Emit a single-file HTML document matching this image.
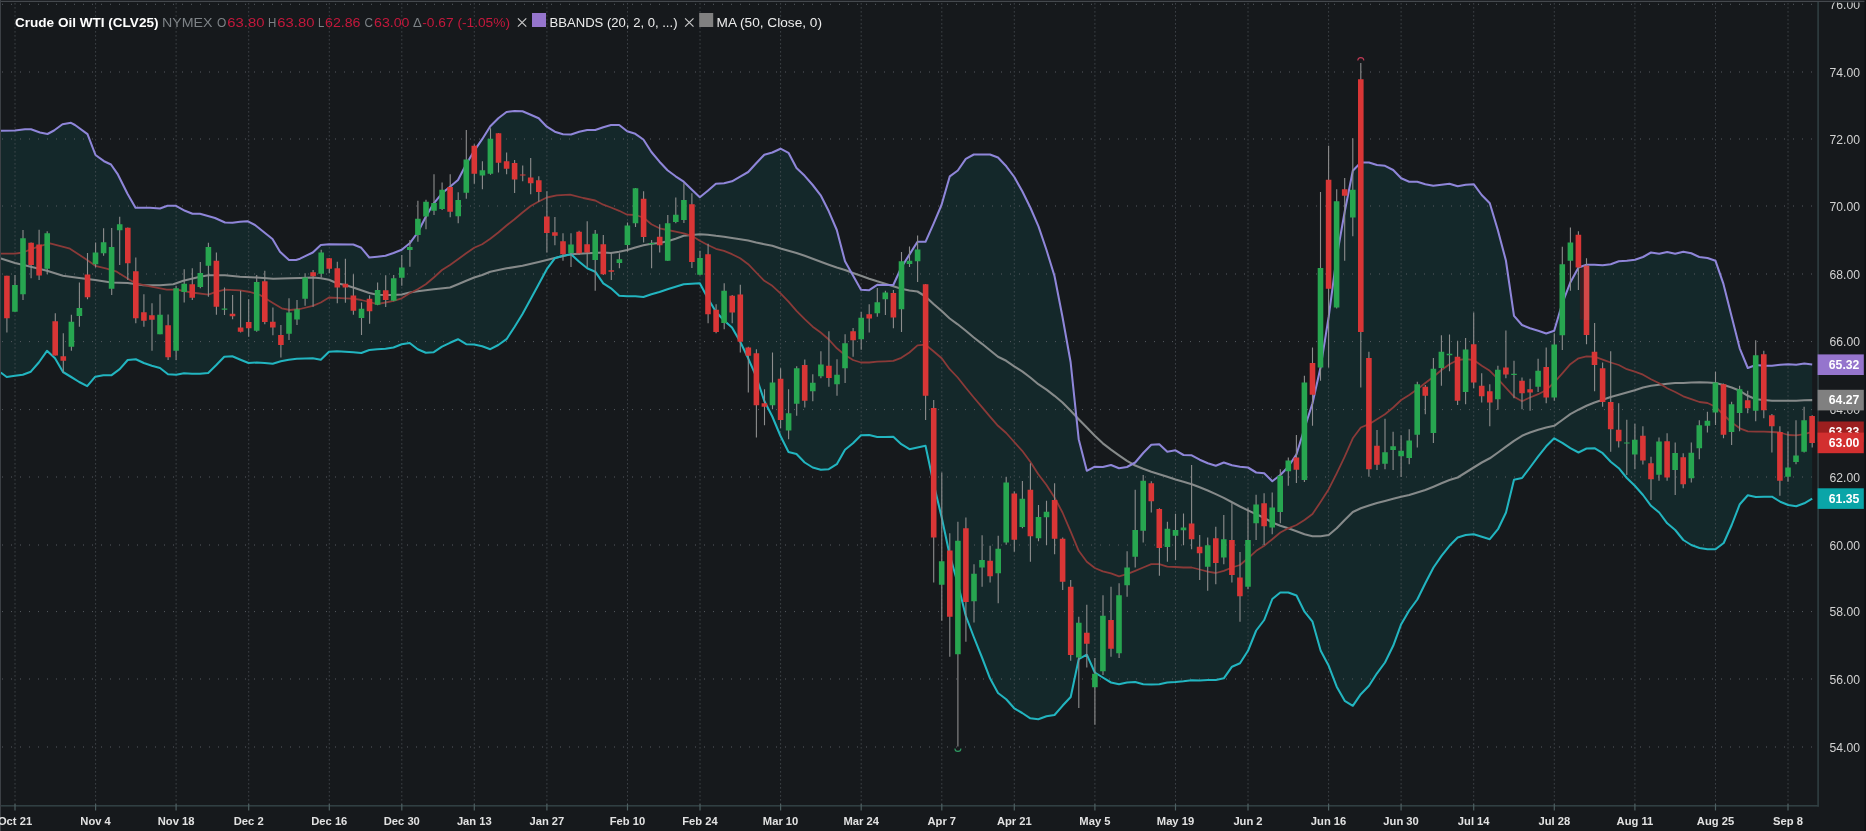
<!DOCTYPE html>
<html lang="en"><head><meta charset="utf-8"><title>Crude Oil WTI (CLV25) Chart</title>
<style>
html,body{margin:0;padding:0;background:#16191c;width:1866px;height:831px;overflow:hidden;font-family:"Liberation Sans",sans-serif;}
#chart{position:relative;width:1866px;height:831px;overflow:hidden;background:#16191c;}
</style></head><body><div id="chart">
<svg width="1866" height="831" viewBox="0 0 1866 831" style="position:absolute;left:0;top:0;display:block">
<rect width="1866" height="831" fill="#16191c"/>
<path d="M0 130.8 L2 130.8 L15 130.5 L25 129.2 L31 129.2 L40 132.5 L47.5 134 L54 130.5 L62.5 124.2 L71 122.8 L75 125 L87.5 134.2 L95.5 155 L104 161.2 L111 164.5 L117.5 173.8 L127.5 193.8 L135.5 207.8 L150 207.8 L160 208.5 L167.5 205.8 L176 205.8 L185 210.8 L192.5 213.8 L200 213.8 L215 218 L225 222.5 L232.5 222.8 L240 221.8 L247.5 221.2 L255 225 L272.5 239 L280 251.8 L289 260 L296 260 L300 258.7 L312.8 252.5 L320.8 245 L329 244.2 L353.3 244.5 L361.3 247.8 L369.3 257.5 L377.3 256.7 L385.5 255.8 L393.5 253 L401.7 249.7 L409.7 243.3 L417.7 232.5 L425.8 216.7 L433.8 203.3 L442 193.3 L450 186.7 L458 180 L466.2 164.2 L474.2 150.8 L482.2 139.2 L490.3 126.3 L498.3 118.3 L506.5 112 L514.5 111 L522.5 111.2 L530.7 114.7 L538.7 118.3 L546.8 126.7 L554.8 131.7 L563 134.2 L571 134.5 L579.2 131.7 L587.2 130 L595.2 130 L603.3 127.2 L611 125 L619.2 125 L627.2 131.3 L635.3 133.8 L643.4 139.5 L651.4 152 L659.5 161.7 L667.5 170.3 L675.6 176.3 L683.7 181.7 L691.7 189.5 L699.8 197.2 L707.8 190.8 L715.9 183.8 L724 183.3 L732 181.3 L740.2 176.7 L748.2 172 L756.2 163.3 L764.3 154.7 L772.3 152.5 L780.5 148.7 L788.5 152.8 L796.5 168 L804.7 175.8 L812.7 185 L820.7 195.3 L828.8 211.3 L836.8 230 L845 261.3 L853 275.5 L861 289.8 L869.2 290.2 L877.2 284.8 L885.2 285 L893.3 285 L901.3 267.5 L909.4 254.6 L917.5 241.8 L925.5 241.8 L933.5 223.8 L941.5 205 L949.8 176.3 L957.8 170.5 L965.8 158.8 L973.8 154.5 L982 154.5 L990 154.5 L998 157.5 L1006.3 166.3 L1014.3 177 L1022.3 191.3 L1030.3 207.5 L1038.5 226.3 L1046.5 250 L1054.5 276 L1062.5 317 L1070.6 362 L1078.7 439.2 L1086.8 470.8 L1094.8 466.7 L1102.8 467 L1111 465 L1119 468.3 L1127 467 L1135.2 462.5 L1143.2 453 L1151.3 444.7 L1159.3 444.2 L1167.3 451.7 L1175.5 450.3 L1183.5 455 L1191.7 455.3 L1199.7 459.7 L1207.8 463.3 L1215.8 465.8 L1223.8 462.5 L1232 465.3 L1240 466.7 L1248 467.5 L1256.2 472.5 L1264.2 473.3 L1272.3 481.3 L1280.3 475 L1288.3 466.7 L1296.5 454.2 L1304.5 428.3 L1312.5 403.3 L1320.7 366.7 L1328.7 316.7 L1336.7 256.7 L1344.7 211.7 L1352.8 170.8 L1360.8 162.5 L1369 162.5 L1377 165 L1385 165.8 L1393.2 170 L1401.2 178.3 L1409.2 181.7 L1417.3 181.7 L1425.3 184.2 L1433.3 185.8 L1441.5 184.7 L1449.5 183.7 L1457.7 186.3 L1465.7 184.7 L1473.7 184.2 L1481.7 195 L1489.8 203.3 L1497.8 230 L1505.9 260.5 L1514 315.8 L1522 325 L1530 328.3 L1538.2 330.8 L1546.2 333.5 L1554.2 330.8 L1562.3 303.3 L1570.3 282.5 L1578.5 267.5 L1586.5 264.7 L1594.5 264.7 L1602.7 265.3 L1610.7 264.2 L1618.8 261.3 L1626.8 260.8 L1635 259.7 L1643 257 L1651 252.5 L1659.2 253.7 L1667.2 252 L1675.2 253.7 L1683.3 251.7 L1691.3 253.3 L1699.3 257 L1707.5 258 L1715.5 260.8 L1723.5 284.2 L1731.7 316.7 L1739.7 348.3 L1747.8 368 L1755.8 365 L1764 365.8 L1772 365.8 L1780.2 364.7 L1788.2 364.2 L1796.2 364.7 L1804.3 363.6 L1812.2 364.6 L1812.2 498.6 L1804.3 503.3 L1796.2 506.3 L1788.2 505 L1780.2 501.7 L1772 496.7 L1764 496.7 L1755.8 497 L1747.8 495.3 L1739.8 504.2 L1731.7 525 L1723.7 543 L1715.5 549.2 L1707.5 549.2 L1699.5 548 L1691.3 545 L1683.3 540 L1675.2 530 L1667.2 523.3 L1659.2 512.5 L1651 505.8 L1643 495 L1634.8 485.8 L1626.8 478 L1618.8 468.2 L1610.7 461.7 L1602.7 453.2 L1594.5 448.2 L1586.5 448.5 L1578.5 452.5 L1570.3 448.2 L1562.3 442.8 L1554.2 438.3 L1546.2 446.3 L1538.2 456.3 L1530 467.5 L1522 478 L1514 479.7 L1506 512.5 L1498 529.2 L1489.8 539.2 L1481.8 536.7 L1473.7 534.2 L1465.7 535 L1457.7 537.5 L1449.5 545.8 L1441.5 555.8 L1433.5 567.5 L1425.3 583.3 L1417.3 599.5 L1409.2 610.5 L1401.2 624.2 L1393.2 645.8 L1385 662.5 L1377 673.3 L1369 685.8 L1360.8 694.2 L1352.8 705.8 L1344.7 700.8 L1336.7 686.7 L1328.7 665.8 L1320.7 650.8 L1312.5 621.7 L1304.5 611.7 L1296.5 595.5 L1288.3 592.5 L1280.3 592.5 L1272.3 599 L1264.2 620 L1256.2 630.5 L1248 650.8 L1240 663.3 L1232 666.7 L1223.8 678.3 L1215.8 680 L1207.8 680 L1199.7 680.5 L1191.7 680.3 L1183.5 681.3 L1175.5 682 L1167.3 682.5 L1159.3 684.2 L1151.3 684.5 L1143.2 684.2 L1135.2 682 L1127 682.5 L1119 684.2 L1111 682.5 L1102.8 677.5 L1094.8 672.5 L1086.8 654.7 L1078.7 659.2 L1070.7 697 L1062.5 705.8 L1054.5 715 L1046.5 716.2 L1038.3 719.2 L1030.3 718.3 L1022.2 713 L1014.2 708.3 L1006.2 699.2 L998 693 L990 678.3 L982 657.5 L973.8 637 L965.8 616 L957.7 583.3 L949.7 555 L941.7 517.5 L933.5 483.3 L925.5 445.8 L917.5 447.5 L909.5 449.2 L901.3 444.2 L893.3 436.7 L885.3 437 L877.2 437 L869.2 435 L861 435.3 L853 443.3 L845 449.8 L836.8 464.2 L828.8 469.2 L820.8 469.7 L812.7 467.5 L804.7 462.5 L796.5 454 L788.5 452 L780.5 436 L772.3 416.5 L764.3 401 L756.2 376.7 L748.2 358.3 L740.2 341.7 L732 327.5 L724 320.5 L715.9 311.7 L707.8 298.3 L699.8 283.3 L691.7 283.8 L683.7 284.2 L675.6 286.7 L667.5 289.2 L659.5 292 L651.4 294.2 L643.4 297 L635.3 296.3 L627.2 296.3 L619.2 295.8 L611 288.3 L603.3 283.3 L595.2 271.7 L587.2 268.3 L579.2 261.7 L571 254.2 L563 255.8 L554.8 258.3 L546.8 269.2 L538.7 284.2 L530.7 299 L522.5 314 L514.5 327 L506.5 339.2 L498.3 345 L490.3 349.2 L482.2 346.3 L474.2 344.5 L466.2 344.2 L458 339.2 L450 342.8 L442 346.7 L433.8 352.2 L425.8 352.8 L417.7 349.2 L409.7 343 L401.7 344.2 L393.5 347.5 L385.5 348.7 L377.3 349.2 L369.3 350 L361.3 353 L353.2 352.2 L345.2 351.7 L337 351.3 L329 351.7 L320.8 359.7 L312.8 358.3 L305 358.5 L296.8 358.8 L288.8 359.7 L280.8 361.3 L272.7 363.7 L264.7 363 L256.7 362.5 L248.5 363 L240.5 359.7 L232.3 356.2 L224.3 356.7 L216.3 365 L208.2 373 L200 373.8 L192 373.8 L184 373.3 L176.2 374.7 L168 374.2 L160 368 L151.8 365.8 L143.8 363 L135.8 359.2 L127.7 360 L119.7 369.2 L111.3 375.3 L103.3 375.3 L95.3 376.7 L87.2 386.2 L79.2 382 L71.2 377 L63 372 L55 358.3 L47 350.8 L38.8 362.5 L30.8 371.7 L22.8 374.7 L15 375.8 L6.7 377 L1.7 373.3 L0 372.5Z" fill="rgba(0,200,190,0.09)"/>
<path d="M15 3.4V805 M95.6 3.4V805 M176.1 3.4V805 M248.7 3.4V805 M329.3 3.4V805 M401.8 3.4V805 M474.3 3.4V805 M546.9 3.4V805 M627.5 3.4V805 M700 3.4V805 M780.6 3.4V805 M861.2 3.4V805 M941.8 3.4V805 M1014.3 3.4V805 M1094.9 3.4V805 M1175.5 3.4V805 M1248 3.4V805 M1328.6 3.4V805 M1401.1 3.4V805 M1473.7 3.4V805 M1554.3 3.4V805 M1634.9 3.4V805 M1715.5 3.4V805 M1788 3.4V805" stroke="#565b61" stroke-width="1" stroke-dasharray="1 3" fill="none"/>
<path d="M2 747H1813 M2 679H1813 M2 611.6H1813 M2 545H1813 M2 477H1813 M2 409.6H1813 M2 341.6H1813 M2 274H1813 M2 206H1813 M2 139H1813 M2 72H1813 M2 4.3H1813" stroke="#565b61" stroke-width="1" stroke-dasharray="1 8" fill="none"/>
<path d="M0 258.2 L1.7 258.7 L15 263 L30.8 266.7 L47 270.8 L63 275.8 L79.2 278 L95.3 280 L111.3 282.5 L127.7 283 L143.3 285.3 L160 285.3 L173.3 284.2 L183.3 280.8 L200 276.7 L208.3 275.3 L225 275.3 L240 276.7 L256.7 277.5 L273.3 278.7 L290 278.3 L300 278 L312.8 277.5 L320.8 278.3 L329 279.7 L337 283.3 L345.2 285 L353.2 287.5 L361.3 290.3 L369.3 293 L377.3 294.7 L385.5 295 L393.5 295 L401.7 294.5 L409.7 292.5 L417.7 291.3 L433.8 289.2 L450 287.5 L458 284.2 L466.2 280.8 L474.2 277.5 L482.2 275 L490.3 271.7 L506.5 268.3 L522.5 265.8 L538.7 262 L554.8 258 L571 254.2 L587.2 253.3 L603.3 252.5 L611 253 L619.2 251.7 L627.2 250 L635.3 247.5 L643.4 245.3 L651.4 243.7 L659.5 243 L667.5 241.3 L675.6 238.7 L683.7 235.8 L691.7 235 L699.8 234.2 L707.8 234.7 L715.9 235.8 L724 236.7 L732 238 L740.2 239.2 L748.2 240.5 L756.2 242.5 L764.3 244.2 L772.3 245.8 L780.5 248.5 L788.5 250.8 L796.5 253 L804.7 255.8 L812.7 258.7 L820.7 261.7 L828.8 264.7 L836.8 267.5 L845 270 L853 273 L861 275.8 L869.2 278.7 L877.2 281.3 L885.2 283.7 L893.3 286.3 L901.3 288.7 L909.4 290.5 L917.5 291.5 L925.5 296.5 L933.5 304 L941.7 311 L949.7 318.5 L957.7 324.3 L965.8 330.8 L973.8 337.5 L982 343.8 L990 350.3 L998 356.7 L1006.2 360.8 L1014.2 366.3 L1022.2 371.3 L1030.3 377.5 L1038.3 384.2 L1046.5 389.7 L1054.5 395.8 L1062.5 402.5 L1070.7 410.8 L1078.7 419.2 L1086.8 427.5 L1094.8 435.8 L1102.8 443.3 L1111 449.7 L1119 455.3 L1127 460.8 L1135.2 465.5 L1143.2 468.8 L1151.3 471.7 L1159.3 474.2 L1167.3 476.8 L1175.5 479.4 L1183.5 481.7 L1191.7 484.2 L1199.7 487.2 L1207.7 490.5 L1215.8 494.1 L1223.8 497.9 L1232 502.3 L1240 506.5 L1248 510.4 L1256.2 514.2 L1264.2 517.8 L1272.3 522.5 L1280.3 525.8 L1288.3 528.3 L1296.5 531.2 L1304.5 534.2 L1312.5 536.3 L1320.7 536.3 L1328.7 535 L1336.7 528.3 L1344.7 520 L1352.8 512 L1360.8 508.2 L1369 505.5 L1377 503 L1385 501 L1393.2 498.8 L1401.2 496.7 L1409.2 495 L1417.3 492.5 L1425.3 490 L1433.5 486.7 L1441.5 483.3 L1449.5 480 L1457.7 477.5 L1465.7 472.5 L1473.7 467.5 L1481.8 462.5 L1489.8 458.3 L1498 452.5 L1506 446.7 L1514 440.8 L1522 435.8 L1530 432.5 L1538.2 429.7 L1546.2 427.5 L1554.2 425.8 L1562.3 420 L1570.3 414.2 L1578.5 409.7 L1586.5 405.8 L1594.5 402.5 L1602.7 399.7 L1610.7 397 L1618.8 394.7 L1626.8 392.5 L1634.8 390.3 L1643 387.5 L1651 385.8 L1659.2 384.7 L1667.2 383.7 L1675.2 383 L1683.3 383 L1691.3 382.5 L1699.5 382.2 L1707.5 382.5 L1715.5 383 L1723.7 385 L1731.7 387.5 L1739.8 390.8 L1747.8 395.8 L1755.8 399.2 L1764 400 L1772 400.8 L1780.2 400.8 L1788.2 400.8 L1796.2 400.8 L1804.3 400.3 L1812.2 400.1" stroke="#868a8a" stroke-width="2.1" fill="none" stroke-linejoin="round"/>
<path d="M0 253.7 L1.7 253.7 L15 253.7 L22.8 252.5 L38.7 246.3 L50 243.3 L70 248.7 L87.2 260 L95.3 265.8 L106.7 268.7 L116.7 271.7 L130 280 L135.8 283.3 L150 286.3 L166.7 289.7 L176.7 289.7 L191.7 292.5 L208.3 294.7 L216.7 291.7 L225 289.7 L240 290.3 L250 292 L260 295 L273.3 303.3 L281.7 308.3 L290 310 L300 309 L312.8 305.8 L320.8 302.5 L329 297.5 L337 297.8 L345.2 298.3 L353.2 298.7 L361.3 300 L369.3 302 L377.3 304.2 L385.5 302.5 L393.5 300.8 L401.7 298.3 L409.7 293.3 L417.7 289.2 L425.8 284.2 L433.8 277.5 L442 270 L450 265 L458 259.2 L466.2 253.3 L474.2 247.8 L482.2 244.2 L490.3 238.7 L498.3 232.5 L506.5 225.5 L514.5 219.2 L522.5 212.5 L530.7 206 L538.7 201.5 L546.8 197.5 L556.7 195.3 L570 194.7 L583.3 198 L595.2 200.5 L603.3 204.7 L611 207.5 L619.2 210.8 L627.2 214.7 L635.3 215 L643.4 217.5 L651.4 224.2 L659.5 228.3 L667.5 230 L675.6 231.7 L683.7 233.3 L691.7 235.8 L699.8 240.8 L707.8 245 L715.9 248.8 L724 250.8 L732 254.2 L740.2 258.3 L748.2 264.2 L756.2 272.5 L764.3 280.8 L772.3 285.8 L780.5 293.3 L788.5 301.7 L796.5 310.8 L804.7 319.2 L812.7 326.7 L820.7 332.5 L828.8 339.5 L836.8 348.3 L845 355 L853 360 L861 362.5 L869.2 362.5 L877.2 361.7 L885.2 361.3 L893.3 360.8 L901.3 357.8 L909.4 352.5 L917.5 345.3 L925.5 344.7 L933.5 351.2 L941.7 358.3 L949.7 369.2 L957.7 377.5 L965.8 387.8 L973.8 397.5 L982 407.2 L990 416.7 L998 425.8 L1006.2 433 L1014.2 442 L1022.2 450.8 L1030.3 461.7 L1038.3 474.2 L1046.5 485 L1054.5 497.5 L1062.5 512.5 L1070.7 531.7 L1078.7 550.8 L1086.8 561.7 L1094.8 568 L1102.8 571.3 L1111 573.3 L1119 576.3 L1127 574.2 L1135.2 570.8 L1143.2 567.5 L1151.3 564.2 L1159.3 564.2 L1167.3 566.7 L1175.5 567 L1183.5 567.5 L1191.7 567.5 L1199.7 569.5 L1207.8 571.7 L1215.8 573 L1223.8 570.8 L1232 567.5 L1240 565 L1248 558.3 L1256.2 550.8 L1264.2 545.8 L1272.3 539.2 L1280.3 532.5 L1288.3 528.3 L1296.5 525 L1304.5 520 L1312.5 514 L1320.7 501.7 L1328.7 489.2 L1336.7 473.3 L1344.7 456.7 L1352.8 438.3 L1360.8 427.5 L1369 424.2 L1377 419.2 L1385 414.2 L1393.2 407.5 L1401.2 400 L1409.2 395 L1417.3 389.2 L1425.3 383 L1433.5 376.7 L1441.5 370 L1449.5 364.2 L1457.7 360 L1465.7 359.2 L1473.7 360 L1481.8 365.8 L1489.8 370.8 L1498 379.2 L1506 387.8 L1514 396.7 L1522 401.3 L1530 397.5 L1538.2 394.2 L1546.2 390 L1554.2 382.5 L1562.3 373.3 L1570.3 364.2 L1578.5 358.3 L1586.5 356.3 L1594.5 356.7 L1602.7 359.7 L1610.7 362.5 L1618.8 365 L1626.8 369.2 L1634.8 371.7 L1643 374.7 L1651 379.2 L1659.2 383.3 L1667.2 388.3 L1675.2 392 L1683.3 396.3 L1691.3 399.2 L1699.5 402 L1707.5 403 L1715.5 406.7 L1723.7 415 L1731.7 422.5 L1739.8 428.3 L1747.8 431.3 L1755.8 431.7 L1764 431.7 L1772 432 L1780.2 432.5 L1788.2 435 L1796.2 435.3 L1804.3 434.2 L1812.2 431.8" stroke="#8a3a38" stroke-width="1.8" fill="none" stroke-linejoin="round"/>
<path d="M0 130.8 L2 130.8 L15 130.5 L25 129.2 L31 129.2 L40 132.5 L47.5 134 L54 130.5 L62.5 124.2 L71 122.8 L75 125 L87.5 134.2 L95.5 155 L104 161.2 L111 164.5 L117.5 173.8 L127.5 193.8 L135.5 207.8 L150 207.8 L160 208.5 L167.5 205.8 L176 205.8 L185 210.8 L192.5 213.8 L200 213.8 L215 218 L225 222.5 L232.5 222.8 L240 221.8 L247.5 221.2 L255 225 L272.5 239 L280 251.8 L289 260 L296 260 L300 258.7 L312.8 252.5 L320.8 245 L329 244.2 L353.3 244.5 L361.3 247.8 L369.3 257.5 L377.3 256.7 L385.5 255.8 L393.5 253 L401.7 249.7 L409.7 243.3 L417.7 232.5 L425.8 216.7 L433.8 203.3 L442 193.3 L450 186.7 L458 180 L466.2 164.2 L474.2 150.8 L482.2 139.2 L490.3 126.3 L498.3 118.3 L506.5 112 L514.5 111 L522.5 111.2 L530.7 114.7 L538.7 118.3 L546.8 126.7 L554.8 131.7 L563 134.2 L571 134.5 L579.2 131.7 L587.2 130 L595.2 130 L603.3 127.2 L611 125 L619.2 125 L627.2 131.3 L635.3 133.8 L643.4 139.5 L651.4 152 L659.5 161.7 L667.5 170.3 L675.6 176.3 L683.7 181.7 L691.7 189.5 L699.8 197.2 L707.8 190.8 L715.9 183.8 L724 183.3 L732 181.3 L740.2 176.7 L748.2 172 L756.2 163.3 L764.3 154.7 L772.3 152.5 L780.5 148.7 L788.5 152.8 L796.5 168 L804.7 175.8 L812.7 185 L820.7 195.3 L828.8 211.3 L836.8 230 L845 261.3 L853 275.5 L861 289.8 L869.2 290.2 L877.2 284.8 L885.2 285 L893.3 285 L901.3 267.5 L909.4 254.6 L917.5 241.8 L925.5 241.8 L933.5 223.8 L941.5 205 L949.8 176.3 L957.8 170.5 L965.8 158.8 L973.8 154.5 L982 154.5 L990 154.5 L998 157.5 L1006.3 166.3 L1014.3 177 L1022.3 191.3 L1030.3 207.5 L1038.5 226.3 L1046.5 250 L1054.5 276 L1062.5 317 L1070.6 362 L1078.7 439.2 L1086.8 470.8 L1094.8 466.7 L1102.8 467 L1111 465 L1119 468.3 L1127 467 L1135.2 462.5 L1143.2 453 L1151.3 444.7 L1159.3 444.2 L1167.3 451.7 L1175.5 450.3 L1183.5 455 L1191.7 455.3 L1199.7 459.7 L1207.8 463.3 L1215.8 465.8 L1223.8 462.5 L1232 465.3 L1240 466.7 L1248 467.5 L1256.2 472.5 L1264.2 473.3 L1272.3 481.3 L1280.3 475 L1288.3 466.7 L1296.5 454.2 L1304.5 428.3 L1312.5 403.3 L1320.7 366.7 L1328.7 316.7 L1336.7 256.7 L1344.7 211.7 L1352.8 170.8 L1360.8 162.5 L1369 162.5 L1377 165 L1385 165.8 L1393.2 170 L1401.2 178.3 L1409.2 181.7 L1417.3 181.7 L1425.3 184.2 L1433.3 185.8 L1441.5 184.7 L1449.5 183.7 L1457.7 186.3 L1465.7 184.7 L1473.7 184.2 L1481.7 195 L1489.8 203.3 L1497.8 230 L1505.9 260.5 L1514 315.8 L1522 325 L1530 328.3 L1538.2 330.8 L1546.2 333.5 L1554.2 330.8 L1562.3 303.3 L1570.3 282.5 L1578.5 267.5 L1586.5 264.7 L1594.5 264.7 L1602.7 265.3 L1610.7 264.2 L1618.8 261.3 L1626.8 260.8 L1635 259.7 L1643 257 L1651 252.5 L1659.2 253.7 L1667.2 252 L1675.2 253.7 L1683.3 251.7 L1691.3 253.3 L1699.3 257 L1707.5 258 L1715.5 260.8 L1723.5 284.2 L1731.7 316.7 L1739.7 348.3 L1747.8 368 L1755.8 365 L1764 365.8 L1772 365.8 L1780.2 364.7 L1788.2 364.2 L1796.2 364.7 L1804.3 363.6 L1812.2 364.6" stroke="#8f86d9" stroke-width="2.05" fill="none" stroke-linejoin="round"/>
<path d="M0 372.5 L1.7 373.3 L6.7 377 L15 375.8 L22.8 374.7 L30.8 371.7 L38.8 362.5 L47 350.8 L55 358.3 L63 372 L71.2 377 L79.2 382 L87.2 386.2 L95.3 376.7 L103.3 375.3 L111.3 375.3 L119.7 369.2 L127.7 360 L135.8 359.2 L143.8 363 L151.8 365.8 L160 368 L168 374.2 L176.2 374.7 L184 373.3 L192 373.8 L200 373.8 L208.2 373 L216.3 365 L224.3 356.7 L232.3 356.2 L240.5 359.7 L248.5 363 L256.7 362.5 L264.7 363 L272.7 363.7 L280.8 361.3 L288.8 359.7 L296.8 358.8 L305 358.5 L312.8 358.3 L320.8 359.7 L329 351.7 L337 351.3 L345.2 351.7 L353.2 352.2 L361.3 353 L369.3 350 L377.3 349.2 L385.5 348.7 L393.5 347.5 L401.7 344.2 L409.7 343 L417.7 349.2 L425.8 352.8 L433.8 352.2 L442 346.7 L450 342.8 L458 339.2 L466.2 344.2 L474.2 344.5 L482.2 346.3 L490.3 349.2 L498.3 345 L506.5 339.2 L514.5 327 L522.5 314 L530.7 299 L538.7 284.2 L546.8 269.2 L554.8 258.3 L563 255.8 L571 254.2 L579.2 261.7 L587.2 268.3 L595.2 271.7 L603.3 283.3 L611 288.3 L619.2 295.8 L627.2 296.3 L635.3 296.3 L643.4 297 L651.4 294.2 L659.5 292 L667.5 289.2 L675.6 286.7 L683.7 284.2 L691.7 283.8 L699.8 283.3 L707.8 298.3 L715.9 311.7 L724 320.5 L732 327.5 L740.2 341.7 L748.2 358.3 L756.2 376.7 L764.3 401 L772.3 416.5 L780.5 436 L788.5 452 L796.5 454 L804.7 462.5 L812.7 467.5 L820.8 469.7 L828.8 469.2 L836.8 464.2 L845 449.8 L853 443.3 L861 435.3 L869.2 435 L877.2 437 L885.3 437 L893.3 436.7 L901.3 444.2 L909.5 449.2 L917.5 447.5 L925.5 445.8 L933.5 483.3 L941.7 517.5 L949.7 555 L957.7 583.3 L965.8 616 L973.8 637 L982 657.5 L990 678.3 L998 693 L1006.2 699.2 L1014.2 708.3 L1022.2 713 L1030.3 718.3 L1038.3 719.2 L1046.5 716.2 L1054.5 715 L1062.5 705.8 L1070.7 697 L1078.7 659.2 L1086.8 654.7 L1094.8 672.5 L1102.8 677.5 L1111 682.5 L1119 684.2 L1127 682.5 L1135.2 682 L1143.2 684.2 L1151.3 684.5 L1159.3 684.2 L1167.3 682.5 L1175.5 682 L1183.5 681.3 L1191.7 680.3 L1199.7 680.5 L1207.8 680 L1215.8 680 L1223.8 678.3 L1232 666.7 L1240 663.3 L1248 650.8 L1256.2 630.5 L1264.2 620 L1272.3 599 L1280.3 592.5 L1288.3 592.5 L1296.5 595.5 L1304.5 611.7 L1312.5 621.7 L1320.7 650.8 L1328.7 665.8 L1336.7 686.7 L1344.7 700.8 L1352.8 705.8 L1360.8 694.2 L1369 685.8 L1377 673.3 L1385 662.5 L1393.2 645.8 L1401.2 624.2 L1409.2 610.5 L1417.3 599.5 L1425.3 583.3 L1433.5 567.5 L1441.5 555.8 L1449.5 545.8 L1457.7 537.5 L1465.7 535 L1473.7 534.2 L1481.8 536.7 L1489.8 539.2 L1498 529.2 L1506 512.5 L1514 479.7 L1522 478 L1530 467.5 L1538.2 456.3 L1546.2 446.3 L1554.2 438.3 L1562.3 442.8 L1570.3 448.2 L1578.5 452.5 L1586.5 448.5 L1594.5 448.2 L1602.7 453.2 L1610.7 461.7 L1618.8 468.2 L1626.8 478 L1634.8 485.8 L1643 495 L1651 505.8 L1659.2 512.5 L1667.2 523.3 L1675.2 530 L1683.3 540 L1691.3 545 L1699.5 548 L1707.5 549.2 L1715.5 549.2 L1723.7 543 L1731.7 525 L1739.8 504.2 L1747.8 495.3 L1755.8 497 L1764 496.7 L1772 496.7 L1780.2 501.7 L1788.2 505 L1796.2 506.3 L1804.3 503.3 L1812.2 498.6" stroke="#22b5c0" stroke-width="2.05" fill="none" stroke-linejoin="round"/>
<path d="M6.9 275.8V332.5 M15 275V311.7 M23 230V300 M31.1 242.5V278.3 M39.1 229.7V280 M47.2 231.3V274.2 M55.3 313.3V355.5 M63.3 333.3V372.5 M71.4 314.7V350.8 M79.4 282.5V326.7 M87.5 253V299.2 M95.6 242.5V267.5 M103.6 228.3V255.8 M111.7 228V295 M119.7 216.7V265 M127.8 227.5V280 M135.8 257.5V323.3 M143.9 294.2V326.7 M152 303.3V350.8 M160 294.2V334.2 M168.1 314.5V360 M176.1 285.8V360 M184.2 269.2V302.5 M192.3 268.3V300 M200.3 262V288.3 M208.4 242.8V296.7 M216.4 252.5V314.7 M224.5 287.5V315 M232.6 295V319.2 M240.6 290.8V332.5 M248.7 299.2V336.7 M256.7 275V331.7 M264.8 270.8V324.2 M272.9 307.5V335.3 M280.9 325V357.5 M289 298.3V340 M297 300V325 M305.1 273.3V305.8 M313.1 270V306.7 M321.2 249.7V277.5 M329.3 258V273.3 M337.3 261.7V303.3 M345.4 258.7V302.8 M353.4 274.2V314.7 M361.5 302.5V335 M369.6 295.3V323.7 M377.6 282.5V305.3 M385.7 275.3V307 M393.7 275V301.3 M401.8 255V285.8 M409.9 240V266.7 M417.9 200.8V241.7 M426 199.7V229.2 M434 174.2V215 M442.1 182.5V210 M450.2 174.2V217.2 M458.2 192.2V223.3 M466.3 130V198.8 M474.3 144.2V183.8 M482.4 161.2V189.2 M490.5 128.3V174.7 M498.5 133V172.5 M506.6 152.5V174.2 M514.6 160V193 M522.7 165.5V181.3 M530.7 158V194.2 M538.8 176.2V201.7 M546.9 191.3V252.5 M554.9 217V245.3 M563 233.3V260.8 M571 233.3V267 M579.1 230.8V255 M587.2 221.3V267.5 M595.2 230V290.8 M603.3 235V275 M611.3 253.3V280 M619.4 253.3V268.3 M627.5 222.5V251.7 M635.5 188V227 M643.6 191.3V242.5 M651.6 240V268.3 M659.7 224.2V252.5 M667.8 215V261 M675.8 197.5V223.3 M683.9 183.3V223 M691.9 193.3V268 M700 250.8V275.3 M708.1 243.7V323.3 M716.1 304.2V333.3 M724.2 283.3V329.2 M732.2 295V323.3 M740.3 284.7V352.5 M748.3 346.7V392.5 M756.4 349.2V437.5 M764.5 389.2V425.3 M772.5 352.5V409.2 M780.6 368.3V428.3 M788.6 389.2V439.2 M796.7 366.3V415.8 M804.8 359.5V407.5 M812.8 374.2V401.3 M820.9 351.2V378.3 M828.9 331.3V386.7 M837 359.2V395.8 M845.1 334.2V383 M853.1 328V356.7 M861.2 312V349.7 M869.2 304.2V332.5 M877.3 288V316.7 M885.4 290.8V315 M893.4 290V328.3 M901.5 252V332 M909.5 246.5V267 M917.6 235.5V282 M925.6 284V420 M933.7 400V582.5 M941.8 472.5V620.8 M949.8 533.3V656.7 M957.9 521.7V746.5 M965.9 517.5V641.7 M974 564.2V622.5 M982.1 535.3V586.7 M990.1 545.8V582.5 M998.2 535.8V603.3 M1006.2 476.7V544.7 M1014.3 491.5V551.7 M1022.4 481V528.3 M1030.4 463.3V561.7 M1038.5 505V541.3 M1046.5 500.8V545 M1054.6 483.3V554.2 M1062.7 537.5V590 M1070.7 580V660.8 M1078.8 616.7V708 M1086.8 604.7V667.5 M1094.9 658V724.7 M1103 595.3V675 M1111 586.7V656.7 M1119.1 583.3V658 M1127.1 551.3V596.7 M1135.2 489.7V567.5 M1143.2 475V542.5 M1151.3 481.3V512.5 M1159.4 508.3V575.8 M1167.4 521.7V561.7 M1175.5 513.7V560 M1183.5 513.5V545.3 M1191.6 465V549.2 M1199.7 535V580 M1207.7 537.5V590.8 M1215.8 526.7V584.2 M1223.8 515V564.2 M1231.9 503.3V582.5 M1240 552V621.7 M1248 507.5V589.2 M1256.1 494.7V540 M1264.1 493.3V545 M1272.2 492.5V534.2 M1280.3 469.2V523.3 M1288.3 457.5V485.8 M1296.4 435V483 M1304.4 375.8V482 M1312.5 347.5V425.8 M1320.5 192V380.8 M1328.6 145.8V367.5 M1336.7 189.2V308.5 M1344.7 178V260.8 M1352.8 138.3V236.3 M1360.8 63V387.5 M1368.9 351.7V476.7 M1377 430V470 M1385 418.7V469.2 M1393.1 431.7V470 M1401.1 435.3V477 M1409.2 429.2V464.2 M1417.3 381.7V447.5 M1425.3 385V414.2 M1433.4 358V443 M1441.4 335.3V385.8 M1449.5 334.5V371.3 M1457.6 340.8V405 M1465.6 338V404.2 M1473.7 312.5V388.3 M1481.7 373.3V402.5 M1489.8 384.2V426.3 M1497.9 365.8V409.7 M1505.9 330.5V378.3 M1514 360.8V398.3 M1522 377.5V409.2 M1530.1 378.7V410.8 M1538.1 358.7V392 M1546.2 347.5V403.3 M1554.3 333.3V400.8 M1562.3 246.7V350 M1570.4 227.5V290.8 M1578.4 231.3V290 M1586.5 258.3V344.2 M1594.6 323V391.3 M1602.6 362.5V406.7 M1610.7 351.3V451.7 M1618.7 403.3V447.5 M1626.8 419.7V475 M1634.9 423.7V469.2 M1642.9 426.3V464.6 M1651 456.7V500 M1659 437.5V480.8 M1667.1 433.3V480.8 M1675.2 442.5V495 M1683.2 453.3V488.3 M1691.3 442.5V482.5 M1699.3 420.3V459.2 M1707.4 411.7V432.5 M1715.5 371.7V425 M1723.5 383.5V438.3 M1731.6 401.7V445 M1739.6 385.8V431.3 M1747.7 390.8V413.3 M1755.7 340.3V421.3 M1763.8 350.8V418.3 M1771.9 414V452.5 M1779.9 426.3V495.8 M1788 431.5V481.7 M1796 420.3V464.2 M1804.1 406.7V452.5 M1812.2 415.3V447.6" stroke="#8d8d8d" stroke-width="1.1" fill="none"/>
<path d="M12.1 285h5.6V311.7h-5.6Z M20.2 238.3h5.6V294.2h-5.6Z M44.4 233.3h5.6V268.7h-5.6Z M68.6 321.7h5.6V346.7h-5.6Z M76.6 308h5.6V316h-5.6Z M92.7 252.5h5.6V264.2h-5.6Z M100.8 242.2h5.6V253.3h-5.6Z M108.8 247h5.6V288.7h-5.6Z M116.9 224.2h5.6V230.3h-5.6Z M157.2 314.7h5.6V334.2h-5.6Z M173.3 288.3h5.6V350.8h-5.6Z M181.4 283.8h5.6V292h-5.6Z M197.5 273h5.6V287h-5.6Z M205.6 247h5.6V265.8h-5.6Z M221.7 308.5h5.6V309.7h-5.6Z M253.9 282h5.6V330.8h-5.6Z M286.2 312.5h5.6V333.8h-5.6Z M294.2 309.2h5.6V319.5h-5.6Z M302.3 277.5h5.6V298.8h-5.6Z M318.4 252.5h5.6V273.7h-5.6Z M358.7 308.7h5.6V318h-5.6Z M374.8 290h5.6V304.7h-5.6Z M390.9 278.3h5.6V300.8h-5.6Z M399 267.5h5.6V277.8h-5.6Z M407 247h5.6V250h-5.6Z M415.1 218.7h5.6V235h-5.6Z M423.2 201.7h5.6V216.5h-5.6Z M431.2 203h5.6V210.8h-5.6Z M439.3 189.7h5.6V209h-5.6Z M455.4 200h5.6V216.2h-5.6Z M463.5 159.5h5.6V192.8h-5.6Z M479.6 170.3h5.6V175.5h-5.6Z M487.6 138.7h5.6V173.8h-5.6Z M568.2 244.5h5.6V253h-5.6Z M592.4 233.8h5.6V260h-5.6Z M616.6 259.2h5.6V263h-5.6Z M624.6 225.5h5.6V245h-5.6Z M632.7 188.3h5.6V223.2h-5.6Z M648.8 243.1h5.6V244.3h-5.6Z M664.9 223.3h5.6V260.8h-5.6Z M673 214.7h5.6V222h-5.6Z M681.1 200h5.6V220h-5.6Z M697.2 258h5.6V274.7h-5.6Z M721.3 290.8h5.6V323h-5.6Z M769.7 382.5h5.6V405.3h-5.6Z M785.8 413.3h5.6V430.5h-5.6Z M793.9 368.3h5.6V403.8h-5.6Z M810 382.8h5.6V391.3h-5.6Z M818.1 364.5h5.6V376.2h-5.6Z M834.2 374.7h5.6V384.2h-5.6Z M842.2 343.3h5.6V368.3h-5.6Z M858.4 317.8h5.6V339.2h-5.6Z M874.5 302.2h5.6V313.3h-5.6Z M882.5 292.5h5.6V299.2h-5.6Z M898.7 261.3h5.6V309.2h-5.6Z M906.7 260.8h5.6V264h-5.6Z M914.8 249.5h5.6V261.3h-5.6Z M938.9 561.3h5.6V584.7h-5.6Z M955.1 540.8h5.6V654.2h-5.6Z M971.2 573.8h5.6V601.3h-5.6Z M979.2 560h5.6V567.5h-5.6Z M995.4 548.8h5.6V573.3h-5.6Z M1003.4 482.5h5.6V542.5h-5.6Z M1019.5 498.7h5.6V527h-5.6Z M1035.7 517h5.6V538.3h-5.6Z M1043.7 511.7h5.6V517.3h-5.6Z M1076 622.7h5.6V657.5h-5.6Z M1092.1 673.7h5.6V687.2h-5.6Z M1100.1 615.8h5.6V671.3h-5.6Z M1116.2 595.3h5.6V653.3h-5.6Z M1124.3 567.5h5.6V585.3h-5.6Z M1132.4 530h5.6V556.7h-5.6Z M1140.4 480.8h5.6V530.8h-5.6Z M1164.6 528.7h5.6V547h-5.6Z M1172.7 530h5.6V535.8h-5.6Z M1180.7 527.5h5.6V530.3h-5.6Z M1204.9 545.3h5.6V566.7h-5.6Z M1221 539.2h5.6V557.5h-5.6Z M1245.2 540h5.6V586.7h-5.6Z M1253.3 504.5h5.6V523.3h-5.6Z M1269.4 507.5h5.6V527.5h-5.6Z M1277.4 475.8h5.6V512h-5.6Z M1285.5 460.5h5.6V471.3h-5.6Z M1301.6 382.5h5.6V480h-5.6Z M1317.7 268h5.6V367.5h-5.6Z M1333.8 201.3h5.6V307.5h-5.6Z M1350 189.7h5.6V217.5h-5.6Z M1382.2 452.2h5.6V463.8h-5.6Z M1390.3 446.2h5.6V450h-5.6Z M1398.3 450.8h5.6V456.2h-5.6Z M1406.4 440.5h5.6V458h-5.6Z M1414.4 384.2h5.6V434.7h-5.6Z M1430.6 368.7h5.6V433h-5.6Z M1438.6 351.7h5.6V368h-5.6Z M1446.7 353.7h5.6V355.3h-5.6Z M1462.8 349.5h5.6V392h-5.6Z M1495 369.7h5.6V399.2h-5.6Z M1511.2 373.7h5.6V374.9h-5.6Z M1535.3 370.8h5.6V386.7h-5.6Z M1551.4 344.5h5.6V397.5h-5.6Z M1559.5 264.2h5.6V335.3h-5.6Z M1567.6 242.5h5.6V260.8h-5.6Z M1624 442.4h5.6V443.6h-5.6Z M1632 439.7h5.6V454.5h-5.6Z M1656.2 441.5h5.6V474.7h-5.6Z M1672.3 453h5.6V470h-5.6Z M1688.5 452.7h5.6V478.3h-5.6Z M1696.5 425.3h5.6V448.2h-5.6Z M1704.6 420.8h5.6V425.8h-5.6Z M1712.6 382.5h5.6V412.5h-5.6Z M1728.7 404.2h5.6V432h-5.6Z M1736.8 389.2h5.6V413h-5.6Z M1752.9 355.3h5.6V410.8h-5.6Z M1785.2 467.5h5.6V476.7h-5.6Z M1793.2 455.5h5.6V462h-5.6Z M1801.3 420.3h5.6V451.7h-5.6Z" fill="#27a650"/>
<path d="M4.1 275.8h5.6V318.3h-5.6Z M28.3 242.8h5.6V265h-5.6Z M36.3 244.5h5.6V275.5h-5.6Z M52.4 321.3h5.6V355.5h-5.6Z M60.5 356.3h5.6V360.8h-5.6Z M84.7 274.5h5.6V297.2h-5.6Z M125 227.8h5.6V263.3h-5.6Z M133 271.3h5.6V318.3h-5.6Z M141.1 312.2h5.6V320.8h-5.6Z M149.1 315.3h5.6V319.7h-5.6Z M165.3 325.2h5.6V357.2h-5.6Z M189.4 284.2h5.6V297.8h-5.6Z M213.6 260.8h5.6V306.7h-5.6Z M229.7 313.7h5.6V316.3h-5.6Z M237.8 327.5h5.6V331.7h-5.6Z M245.9 322h5.6V328.3h-5.6Z M262 281.2h5.6V322h-5.6Z M270 321.7h5.6V327.5h-5.6Z M278.1 335h5.6V345h-5.6Z M310.3 272.2h5.6V276.2h-5.6Z M326.4 258.3h5.6V268.7h-5.6Z M334.5 268.3h5.6V287.5h-5.6Z M342.6 283.8h5.6V287.5h-5.6Z M350.6 295.5h5.6V310.8h-5.6Z M366.7 298.7h5.6V311.3h-5.6Z M382.9 290.3h5.6V300h-5.6Z M447.3 187h5.6V211.7h-5.6Z M471.5 145.8h5.6V173.7h-5.6Z M495.7 133.3h5.6V162.8h-5.6Z M503.8 161.3h5.6V168.7h-5.6Z M511.8 163h5.6V179.5h-5.6Z M519.9 174.4h5.6V175.6h-5.6Z M527.9 177.5h5.6V183.3h-5.6Z M536 180.3h5.6V192h-5.6Z M544 216.5h5.6V233h-5.6Z M552.1 232.2h5.6V235.8h-5.6Z M560.2 241.3h5.6V254.2h-5.6Z M576.3 231.7h5.6V253.3h-5.6Z M584.3 244.2h5.6V252.5h-5.6Z M600.5 244.2h5.6V274.2h-5.6Z M608.5 270.3h5.6V271.7h-5.6Z M640.8 198.7h5.6V237h-5.6Z M656.9 236.7h5.6V245.3h-5.6Z M689.1 204.2h5.6V262h-5.6Z M705.2 254.2h5.6V314.2h-5.6Z M713.3 309.7h5.6V332h-5.6Z M729.4 295.8h5.6V312.5h-5.6Z M737.5 294.5h5.6V341.7h-5.6Z M745.5 347.5h5.6V355.8h-5.6Z M753.6 353.3h5.6V405.3h-5.6Z M761.6 403.3h5.6V406.7h-5.6Z M777.8 378.7h5.6V420h-5.6Z M801.9 365h5.6V400.8h-5.6Z M826.1 365.8h5.6V378h-5.6Z M850.3 331.3h5.6V340.3h-5.6Z M866.4 314.2h5.6V318.5h-5.6Z M890.6 293h5.6V317.5h-5.6Z M922.8 284.2h5.6V395.8h-5.6Z M930.9 408h5.6V537.5h-5.6Z M947 550.5h5.6V616.7h-5.6Z M963.1 528.3h5.6V602h-5.6Z M987.3 560.8h5.6V576.3h-5.6Z M1011.5 493.5h5.6V539.7h-5.6Z M1027.6 489.8h5.6V536.3h-5.6Z M1051.8 500h5.6V538.7h-5.6Z M1059.8 538.7h5.6V581.7h-5.6Z M1067.9 586.7h5.6V655h-5.6Z M1084 632.7h5.6V643.8h-5.6Z M1108.2 620h5.6V648.7h-5.6Z M1148.5 483.3h5.6V501.3h-5.6Z M1156.5 509h5.6V548h-5.6Z M1188.8 523.5h5.6V539.2h-5.6Z M1196.8 546.7h5.6V553.3h-5.6Z M1213 538.3h5.6V563h-5.6Z M1229.1 540h5.6V575h-5.6Z M1237.1 577.5h5.6V596.3h-5.6Z M1261.3 503.3h5.6V526.3h-5.6Z M1293.6 457.5h5.6V469.7h-5.6Z M1309.7 363h5.6V394.8h-5.6Z M1325.8 179.7h5.6V288.7h-5.6Z M1341.9 189.2h5.6V195.8h-5.6Z M1358 79.2h5.6V332h-5.6Z M1366.1 358h5.6V469.2h-5.6Z M1374.1 445.8h5.6V464.7h-5.6Z M1422.5 386.7h5.6V395.8h-5.6Z M1454.7 356.7h5.6V400.8h-5.6Z M1470.9 344.2h5.6V382.5h-5.6Z M1478.9 385.8h5.6V396.3h-5.6Z M1487 391.3h5.6V402.5h-5.6Z M1503.1 367.5h5.6V374.5h-5.6Z M1519.2 380.8h5.6V393.3h-5.6Z M1527.3 389.2h5.6V392.5h-5.6Z M1543.4 367h5.6V397.5h-5.6Z M1575.6 234.7h5.6V267.5h-5.6Z M1583.7 265.8h5.6V335h-5.6Z M1591.7 351.7h5.6V365h-5.6Z M1599.8 368.3h5.6V402h-5.6Z M1607.9 402h5.6V429.2h-5.6Z M1615.9 429.7h5.6V441.3h-5.6Z M1640.1 435.8h5.6V460.5h-5.6Z M1648.2 463.3h5.6V479.2h-5.6Z M1664.3 441.3h5.6V477.5h-5.6Z M1680.4 457.2h5.6V484.2h-5.6Z M1720.7 384.2h5.6V434.7h-5.6Z M1744.9 400.3h5.6V408.3h-5.6Z M1761 354.2h5.6V410.3h-5.6Z M1769 415.3h5.6V426.3h-5.6Z M1777.1 432h5.6V480.8h-5.6Z M1809.3 415.9h5.6V442.9h-5.6Z" fill="#d93636"/>
<rect x="1579.8" y="268.5" width="3.9" height="51" fill="#4c181c" opacity="0.6"/>
<rect x="1583.7" y="266" width="5.6" height="54" fill="#b0a8a8" opacity="0.16"/>
<path d="M1357.8 60.6a3 3 0 0 1 6 0" stroke="#c23a55" stroke-width="1.1" fill="none"/>
<path d="M954.9 748.4a3 3 0 0 0 6 0" stroke="#2f9a62" stroke-width="1.1" fill="none"/>
<rect x="0" y="0" width="1866" height="1" fill="#1f2226"/>
<rect x="0" y="1" width="1866" height="1" fill="#45494e"/>
<rect x="0" y="0" width="1" height="831" fill="#3c4045"/>
<rect x="1864.5" y="0" width="1.5" height="831" fill="#0f1114"/>
<rect x="1817.3" y="2" width="1.6" height="804.6" fill="#303f42"/>
<rect x="1" y="805" width="1817.9" height="1.6" fill="#303f42"/>
<path d="M15 804V810.5 M95.6 804V810.5 M176.1 804V810.5 M248.7 804V810.5 M329.3 804V810.5 M401.8 804V810.5 M474.3 804V810.5 M546.9 804V810.5 M627.5 804V810.5 M700 804V810.5 M780.6 804V810.5 M861.2 804V810.5 M941.8 804V810.5 M1014.3 804V810.5 M1094.9 804V810.5 M1175.5 804V810.5 M1248 804V810.5 M1328.6 804V810.5 M1401.1 804V810.5 M1473.7 804V810.5 M1554.3 804V810.5 M1634.9 804V810.5 M1715.5 804V810.5 M1788 804V810.5" stroke="#4d5f61" stroke-width="1.2" fill="none"/>
</svg>
<svg width="1866" height="831" viewBox="0 0 1866 831" style="position:absolute;left:0;top:0;display:block;will-change:transform">
<g font-family="Liberation Sans, sans-serif" font-size="11.2" font-weight="700" fill="#e2e2e2" text-anchor="middle">
<text x="15" y="825">Oct 21</text>
<text x="95.6" y="825">Nov 4</text>
<text x="176.1" y="825">Nov 18</text>
<text x="248.7" y="825">Dec 2</text>
<text x="329.3" y="825">Dec 16</text>
<text x="401.8" y="825">Dec 30</text>
<text x="474.3" y="825">Jan 13</text>
<text x="546.9" y="825">Jan 27</text>
<text x="627.5" y="825">Feb 10</text>
<text x="700" y="825">Feb 24</text>
<text x="780.6" y="825">Mar 10</text>
<text x="861.2" y="825">Mar 24</text>
<text x="941.8" y="825">Apr 7</text>
<text x="1014.3" y="825">Apr 21</text>
<text x="1094.9" y="825">May 5</text>
<text x="1175.5" y="825">May 19</text>
<text x="1248" y="825">Jun 2</text>
<text x="1328.6" y="825">Jun 16</text>
<text x="1401.1" y="825">Jun 30</text>
<text x="1473.7" y="825">Jul 14</text>
<text x="1554.3" y="825">Jul 28</text>
<text x="1634.9" y="825">Aug 11</text>
<text x="1715.5" y="825">Aug 25</text>
<text x="1788" y="825">Sep 8</text>
</g>
<g font-family="Liberation Sans, sans-serif" font-size="12" fill="#d2d2d2">
<clipPath id="cp"><rect x="1819" y="2.6" width="47" height="830"/></clipPath><g clip-path="url(#cp)">
<text x="1829.6" y="751.6" textLength="30.4" lengthAdjust="spacingAndGlyphs">54.00</text>
<text x="1829.6" y="683.6" textLength="30.4" lengthAdjust="spacingAndGlyphs">56.00</text>
<text x="1829.6" y="616.2" textLength="30.4" lengthAdjust="spacingAndGlyphs">58.00</text>
<text x="1829.6" y="549.6" textLength="30.4" lengthAdjust="spacingAndGlyphs">60.00</text>
<text x="1829.6" y="481.6" textLength="30.4" lengthAdjust="spacingAndGlyphs">62.00</text>
<text x="1829.6" y="414.2" textLength="30.4" lengthAdjust="spacingAndGlyphs">64.00</text>
<text x="1829.6" y="346.2" textLength="30.4" lengthAdjust="spacingAndGlyphs">66.00</text>
<text x="1829.6" y="278.6" textLength="30.4" lengthAdjust="spacingAndGlyphs">68.00</text>
<text x="1829.6" y="210.6" textLength="30.4" lengthAdjust="spacingAndGlyphs">70.00</text>
<text x="1829.6" y="143.6" textLength="30.4" lengthAdjust="spacingAndGlyphs">72.00</text>
<text x="1829.6" y="76.6" textLength="30.4" lengthAdjust="spacingAndGlyphs">74.00</text>
<text x="1829.6" y="8.9" textLength="30.4" lengthAdjust="spacingAndGlyphs">76.00</text>
</g></g>
<rect x="1817.6" y="354.4" width="46.2" height="20.6" fill="#9575cd"/><text x="1828.8" y="369" textLength="30.6" lengthAdjust="spacingAndGlyphs" font-family="Liberation Sans, sans-serif" font-size="12" font-weight="700" fill="#fff">65.32</text>
<rect x="1817.6" y="389.8" width="46.2" height="20.6" fill="#808080"/><text x="1828.8" y="404.4" textLength="30.6" lengthAdjust="spacingAndGlyphs" font-family="Liberation Sans, sans-serif" font-size="12" font-weight="700" fill="#fff">64.27</text>
<rect x="1817.6" y="421.5" width="46.2" height="20.6" fill="#9c1f1f"/><text x="1828.8" y="436.1" textLength="30.6" lengthAdjust="spacingAndGlyphs" font-family="Liberation Sans, sans-serif" font-size="12" font-weight="700" fill="#fff">63.33</text>
<rect x="1817.6" y="432.6" width="46.2" height="20.6" fill="#d32f2f"/><text x="1828.8" y="447.2" textLength="30.6" lengthAdjust="spacingAndGlyphs" font-family="Liberation Sans, sans-serif" font-size="12" font-weight="700" fill="#fff">63.00</text>
<rect x="1817.6" y="488.3" width="46.2" height="20.6" fill="#0aa5a8"/><text x="1828.8" y="502.9" textLength="30.6" lengthAdjust="spacingAndGlyphs" font-family="Liberation Sans, sans-serif" font-size="12" font-weight="700" fill="#fff">61.35</text>
<g font-family="Liberation Sans, sans-serif" font-size="13.2">
<text x="15" y="27" textLength="143.5" lengthAdjust="spacingAndGlyphs" fill="#ffffff" font-weight="700">Crude Oil WTI (CLV25)</text>
<text x="162" y="27" textLength="50.5" lengthAdjust="spacingAndGlyphs" fill="#7d8286" font-weight="400">NYMEX</text>
<text x="217" y="27" textLength="9.3" lengthAdjust="spacingAndGlyphs" fill="#7d8286" font-weight="400">O</text>
<text x="227.3" y="27" textLength="37.2" lengthAdjust="spacingAndGlyphs" fill="#c4183c" font-weight="400">63.80</text>
<text x="268" y="27" textLength="8.3" lengthAdjust="spacingAndGlyphs" fill="#7d8286" font-weight="400">H</text>
<text x="277.3" y="27" textLength="37.2" lengthAdjust="spacingAndGlyphs" fill="#c4183c" font-weight="400">63.80</text>
<text x="318" y="27" textLength="6.3" lengthAdjust="spacingAndGlyphs" fill="#7d8286" font-weight="400">L</text>
<text x="325" y="27" textLength="35.5" lengthAdjust="spacingAndGlyphs" fill="#c4183c" font-weight="400">62.86</text>
<text x="364.5" y="27" textLength="8.5" lengthAdjust="spacingAndGlyphs" fill="#7d8286" font-weight="400">C</text>
<text x="374" y="27" textLength="35.5" lengthAdjust="spacingAndGlyphs" fill="#c4183c" font-weight="400">63.00</text>
<text x="413" y="27" textLength="8.8" lengthAdjust="spacingAndGlyphs" fill="#7d8286" font-weight="400">Δ</text>
<text x="422.3" y="27" textLength="87.7" lengthAdjust="spacingAndGlyphs" fill="#c4183c" font-weight="400">-0.67 (-1.05%)</text>
<text x="549.5" y="27" textLength="128" lengthAdjust="spacingAndGlyphs" fill="#ececec" font-weight="400">BBANDS (20, 2, 0, ...)</text>
<text x="716.5" y="27" textLength="105.5" lengthAdjust="spacingAndGlyphs" fill="#ececec" font-weight="400">MA (50, Close, 0)</text>
</g>
<path d="M517.9 18.3l8.4 8.4m0 -8.4l-8.4 8.4" stroke="#c9c9c9" stroke-width="1.2" fill="none"/>
<path d="M685.0999999999999 18.3l8.4 8.4m0 -8.4l-8.4 8.4" stroke="#c9c9c9" stroke-width="1.2" fill="none"/>
<rect x="532" y="13" width="14" height="14" fill="#9575cd"/>
<rect x="699.2" y="13" width="14" height="14" fill="#808080"/>
</svg>
</div></body></html>
